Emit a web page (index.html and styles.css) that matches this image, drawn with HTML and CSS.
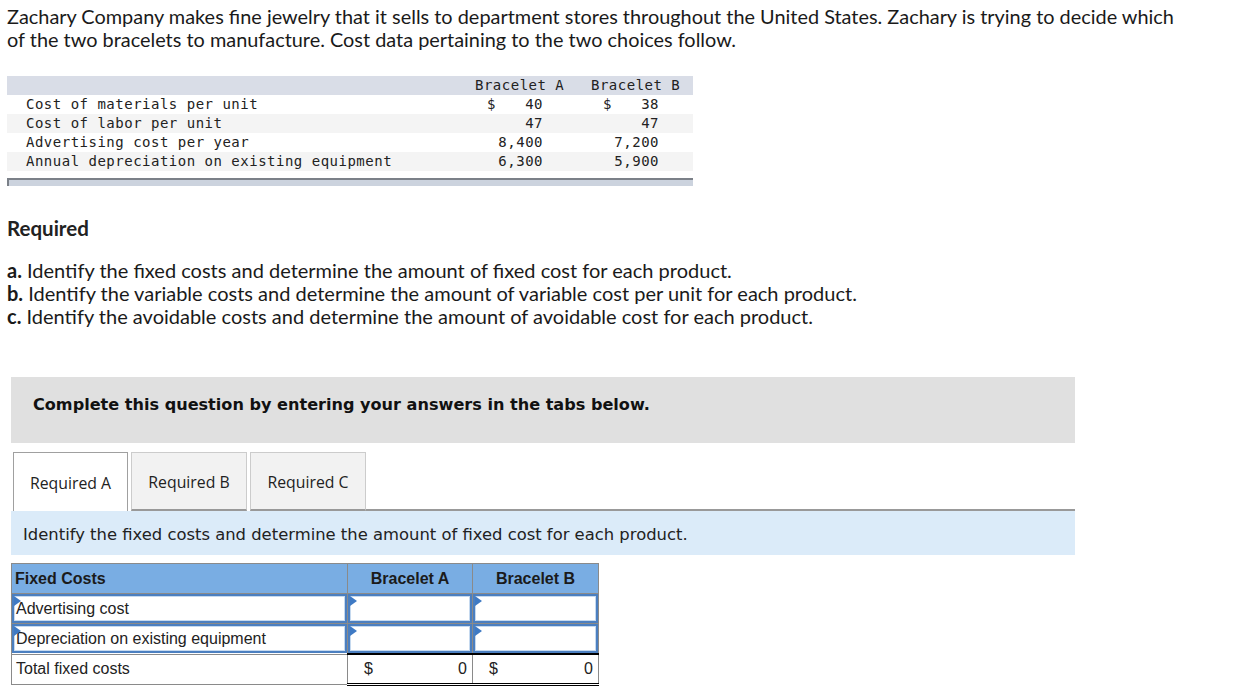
FILE: index.html
```html
<!DOCTYPE html>
<html>
<head>
<meta charset="utf-8">
<link rel="stylesheet" href="styles.css">
</head>
<body>
<div class="page">
  <p class="intro">Zachary Company makes fine jewelry that it sells to department stores throughout the United States. Zachary is trying to decide which of the two bracelets to manufacture. Cost data pertaining to the two choices follow.</p>

  <div class="data">
    <table class="data-table">
      <thead>
        <tr><th class="lbl"></th><th class="col">Bracelet A</th><th class="col colb">Bracelet B</th></tr>
      </thead>
      <tbody>
        <tr><td class="lbl">Cost of materials per unit</td><td class="val"><span class="cur">$</span>40</td><td class="val valb"><span class="cur">$</span>38</td></tr>
        <tr class="alt"><td class="lbl">Cost of labor per unit</td><td class="val">47</td><td class="val valb">47</td></tr>
        <tr><td class="lbl">Advertising cost per year</td><td class="val">8,400</td><td class="val valb">7,200</td></tr>
        <tr class="alt"><td class="lbl">Annual depreciation on existing equipment</td><td class="val">6,300</td><td class="val valb">5,900</td></tr>
      </tbody>
    </table>
    <div class="data-foot"></div>
  </div>

  <h3 class="req-title">Required</h3>
  <ol class="req-list">
    <li><b>a.</b> Identify the fixed costs and determine the amount of fixed cost for each product.</li>
    <li><b>b.</b> Identify the variable costs and determine the amount of variable cost per unit for each product.</li>
    <li><b>c.</b> Identify the avoidable costs and determine the amount of avoidable cost for each product.</li>
  </ol>

  <div class="notice">Complete this question by entering your answers in the tabs below.</div>

  <div class="tabs">
    <div class="tab active">Required A</div>
    <div class="tab">Required B</div>
    <div class="tab">Required C</div>
    <div class="tab-rest"></div>
  </div>
  <div class="instr">Identify the fixed costs and determine the amount of fixed cost for each product.</div>

  <table class="ans">
    <colgroup><col class="c1"><col class="c2"><col class="c3"></colgroup>
    <thead>
      <tr><th class="a-lbl">Fixed Costs</th><th class="a-col">Bracelet A</th><th class="a-col">Bracelet B</th></tr>
    </thead>
    <tbody>
      <tr class="in-row">
        <td class="a-lbl"><div class="inp"><span class="flag"></span>Advertising cost</div></td>
        <td class="a-val"><div class="inp"><span class="flag"></span></div></td>
        <td class="a-val"><div class="inp"><span class="flag"></span></div></td>
      </tr>
      <tr class="in-row">
        <td class="a-lbl"><div class="inp"><span class="flag"></span>Depreciation on existing equipment</div></td>
        <td class="a-val"><div class="inp"><span class="flag"></span></div></td>
        <td class="a-val"><div class="inp"><span class="flag"></span></div></td>
      </tr>
      <tr class="total">
        <td class="a-lbl"><div class="plain">Total fixed costs</div></td>
        <td class="a-tot"><span class="dol">$</span><span class="num">0</span></td>
        <td class="a-tot"><span class="dol">$</span><span class="num">0</span></td>
      </tr>
    </tbody>
  </table>
</div>
</body>
</html>
```

FILE: styles.css
```css
html, body {
  margin: 0;
  padding: 0;
  background: #fff;
}
.page {
  padding: 5px 0 0 7px;
  font-family: "Lato", "Open Sans", sans-serif;
  color: #1a1a1a;
}
.intro {
  margin: 0;
  width: 1180px;
  font-size: 19.9px;
  line-height: 23px;
}

/* data table */
.data {
  margin-top: 25px;
  width: 686px;
}
.data-table {
  width: 686px;
  border-collapse: collapse;
  table-layout: fixed;
  font-family: "DejaVu Sans Mono", "Liberation Mono", monospace;
  font-size: 14px;
  letter-spacing: 0.5px;
  color: #222;
}
.data-table th, .data-table td {
  padding: 0;
  height: 19px;
  line-height: 19px;
  font-weight: normal;
  white-space: nowrap;
}
.data-table thead tr {
  background: #d9dde7;
}
.data-table tr.alt {
  background: #f4f4f4;
}
.data-table .lbl {
  padding-left: 19px;
  text-align: left;
}
.data-table th.lbl {
  width: 449px;
}
.data-table th.col {
  width: 116px;
  text-align: left;
}
.data-table th.colb {
  width: 102px;
}
.data-table td.val {
  text-align: right;
  padding-right: 48px;
}
.data-table td.valb {
  padding-right: 34px;
}
.data-table .cur {
  float: left;
  padding-left: 12px;
}
.data-foot {
  margin-top: 7px;
  height: 6px;
  background: #ccd3de;
  border-top: 2px solid #7b8088;
  border-left: 2px solid #7b8088;
}

/* required */
.req-title {
  margin: 31px 0 0;
  font-size: 20.5px;
  line-height: 23px;
  font-weight: 700;
  color: #222;
}
.req-list {
  list-style: none;
  margin: 19px 0 0;
  padding: 0;
  font-size: 20px;
  line-height: 23px;
}
.req-list b {
  font-weight: 700;
}

/* notice */
.notice {
  box-sizing: border-box;
  margin: 49px 0 0 4px;
  width: 1064px;
  height: 66px;
  padding: 18px 0 0 22px;
  background: #e0e0e0;
  font-family: "DejaVu Sans", Verdana, sans-serif;
  font-weight: 700;
  font-size: 16.1px;
  line-height: 20px;
  color: #111;
}

/* tabs */
.tabs {
  margin: 9px 0 0 6px;
  width: 1062px;
  display: flex;
  align-items: flex-end;
}
.tab {
  box-sizing: border-box;
  width: 116px;
  height: 59px;
  margin-right: 3px;
  display: flex;
  align-items: center;
  justify-content: center;
  padding-top: 2px;
  font-family: "Open Sans", "DejaVu Sans", sans-serif;
  font-size: 15.8px;
  color: #222;
  background: #f2f2f2;
  border: 1px solid #cccccc;
  border-bottom: 2px solid #999;
}
.tab.active {
  width: 115px;
  background: #fff;
  border: 1px solid #a0a0a0;
  border-bottom: none;
}
.tab-rest {
  flex: 1;
  border-bottom: 2px solid #999;
  margin-left: -3px;
}
.instr {
  box-sizing: border-box;
  margin-left: 4px;
  width: 1064px;
  height: 44px;
  padding: 14px 0 0 12px;
  background: #dbebf9;
  font-family: "DejaVu Sans", Verdana, sans-serif;
  font-size: 16.4px;
  line-height: 20px;
  color: #222;
}

/* answer table */
.ans {
  margin: 8px 0 0 4px;
  width: 587px;
  table-layout: fixed;
  border-collapse: collapse;
  font-family: "Liberation Sans", Arial, sans-serif;
  font-size: 16px;
  color: #222;
}
.ans col.c1 { width: 336px; }
.ans col.c2 { width: 125px; }
.ans col.c3 { width: 126px; }
.ans th {
  height: 29px;
  padding: 0;
  background: #79ade3;
  border: 1px solid #8a8a8a;
  font-weight: 700;
  color: #1b1b1b;
}
.ans th.a-lbl {
  text-align: left;
  padding-left: 3px;
}
.ans th.a-col {
  text-align: center;
}
.ans td {
  padding: 0;
  border: 1px solid #8a8a8a;
}
.inp {
  position: relative;
  box-sizing: border-box;
  height: 29px;
  border: 2px solid #4b7fc0;
  box-shadow: inset 0 0 0 1px #c5d9ef;
  display: flex;
  align-items: center;
  padding-left: 2px;
  background: #fff;
}
.flag {
  position: absolute;
  left: 0;
  top: 0;
  width: 0;
  height: 0;
  border-top: 5px solid transparent;
  border-bottom: 5px solid transparent;
  border-left: 7px solid #3f7ac4;
}
.plain {
  height: 29px;
  display: flex;
  align-items: center;
  padding-left: 4px;
}
.total td.a-tot {
  border-top: 2px solid #000;
  border-bottom: 3px double #000;
  padding: 0 5px 0 16px;
}
.a-tot .dol {
  float: left;
}
.a-tot .num {
  float: right;
}
```
